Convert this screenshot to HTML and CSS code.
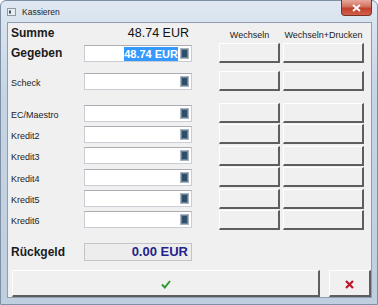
FILE: index.html
```html
<!DOCTYPE html>
<html lang="de">
<head>
  <meta charset="UTF-8" />
  <title>Kassieren</title>
  <link rel="stylesheet" href="styles.css">
</head>
<body>
  <div class="window">
    <div class="titlebar">
      <svg class="app-icon" width="9" height="8" viewBox="0 0 9 8">
        <rect x="0.5" y="0.5" width="8" height="7" fill="#e9edf1" stroke="#8d99a6"/>
        <rect x="2" y="2.5" width="2" height="3" fill="#3d5366"/>
      </svg>
      <span class="title">Kassieren</span>
      <div class="close-btn">
        <svg width="9" height="8" viewBox="0 0 9 8">
          <path d="M1 1 L8 7 M8 1 L1 7" stroke="#fff" stroke-width="1.8"/>
        </svg>
      </div>
    </div>

    <div class="client">
      <div class="row head-row">
        <span class="label big">Summe</span>
        <span class="sum-value">48.74 EUR</span>
        <span class="col-head col1">Wechseln</span>
        <span class="col-head col2">Wechseln+Drucken</span>
      </div>

      <div class="row">
        <span class="label big">Gegeben</span>
        <div class="field">
          <span class="field-text"><span class="selected">48.74 EUR</span></span>
          <span class="spin"></span>
        </div>
        <div class="btn col1"></div>
        <div class="btn col2"></div>
      </div>

      <div class="row scheck-row">
        <span class="label small">Scheck</span>
        <div class="field"><span class="field-text"></span><span class="spin"></span></div>
        <div class="btn col1"></div>
        <div class="btn col2"></div>
      </div>

      <div class="card-group">
        <div class="row">
          <span class="label small">EC/Maestro</span>
          <div class="field"><span class="field-text"></span><span class="spin"></span></div>
          <div class="btn col1"></div>
          <div class="btn col2"></div>
        </div>
        <div class="row">
          <span class="label small">Kredit2</span>
          <div class="field"><span class="field-text"></span><span class="spin"></span></div>
          <div class="btn col1"></div>
          <div class="btn col2"></div>
        </div>
        <div class="row">
          <span class="label small">Kredit3</span>
          <div class="field"><span class="field-text"></span><span class="spin"></span></div>
          <div class="btn col1"></div>
          <div class="btn col2"></div>
        </div>
        <div class="row">
          <span class="label small">Kredit4</span>
          <div class="field"><span class="field-text"></span><span class="spin"></span></div>
          <div class="btn col1"></div>
          <div class="btn col2"></div>
        </div>
        <div class="row">
          <span class="label small">Kredit5</span>
          <div class="field"><span class="field-text"></span><span class="spin"></span></div>
          <div class="btn col1"></div>
          <div class="btn col2"></div>
        </div>
        <div class="row">
          <span class="label small">Kredit6</span>
          <div class="field"><span class="field-text"></span><span class="spin"></span></div>
          <div class="btn col1"></div>
          <div class="btn col2"></div>
        </div>
      </div>

      <div class="row change-row">
        <span class="label big">Rückgeld</span>
        <div class="change-box">0.00 EUR</div>
      </div>

      <div class="actions">
        <div class="btn ok-btn">
          <svg width="10" height="9" viewBox="0 0 10 9">
            <path d="M1 4.5 L3.8 7.5 L9 1" fill="none" stroke="#2f9a2a" stroke-width="2"/>
          </svg>
        </div>
        <div class="btn cancel-btn">
          <svg width="9" height="9" viewBox="0 0 9 9">
            <path d="M1 1 L8 8 M8 1 L1 8" stroke="#c0142b" stroke-width="2.2"/>
          </svg>
        </div>
      </div>
    </div>
  </div>
</body>
</html>
```

FILE: styles.css
```css
body {
  margin: 0;
  font-family: 'Liberation Sans', Arial, sans-serif;
  background: #fff;
}

.window {
  width: 378px;
  height: 305px;
  box-sizing: border-box;
  display: flex;
  flex-direction: column;
  background: linear-gradient(to bottom, #dfe8f2, #c6d5e5 30%, #bfcfe0);
  border: 1px solid #7f90a4;
  border-radius: 6px 6px 0 0;
}

/* title bar */

.titlebar {
  height: 21px;
  display: flex;
  align-items: center;
  padding-left: 6px;
}

.app-icon {
  margin-top: 1px;
}

.title {
  font-size: 8.5px;
  color: #1e1e1e;
  margin-left: 6px;
  margin-top: 1px;
}

.close-btn {
  margin-left: auto;
  margin-right: 5px;
  align-self: flex-start;
  margin-top: -1px;
  width: 31px;
  height: 16px;
  display: flex;
  align-items: center;
  justify-content: center;
  background: linear-gradient(to bottom, #e9a99b, #d0705e 45%, #c0402c 55%, #d2604a);
  border: 1px solid #7a3226;
  border-top: none;
  border-radius: 0 0 4px 4px;
  box-sizing: border-box;
}

/* client area */

.client {
  flex: 1;
  margin: 0 5px 6px 6px;
  background: #f0f0f0;
  border: 1px solid #8e9db0;
  padding-left: 3px;
  display: flex;
  flex-direction: column;
}

.row {
  display: flex;
  align-items: center;
  height: 20px;
  flex-shrink: 0;
}

.head-row {
  height: 20px;
}

.scheck-row {
  margin-top: 8px;
}

.card-group {
  display: flex;
  flex-direction: column;
  gap: 1.4px;
  margin-top: 12px;
}

.change-row {
  margin-top: 12px;
}

.label {
  width: 73px;
  flex-shrink: 0;
  color: #1b1b1b;
}

.label.big {
  font-size: 12px;
  font-weight: bold;
}

.label.small {
  font-size: 9px;
  padding-top: 3px;
}

.sum-value {
  width: 108px;
  box-sizing: border-box;
  padding-right: 3px;
  text-align: right;
  font-size: 12.5px;
  color: #111;
}

.col-head {
  font-size: 9px;
  color: #222;
  text-align: center;
  padding-top: 3px;
}

/* text boxes */

.field {
  width: 108px;
  height: 17px;
  box-sizing: border-box;
  display: flex;
  align-items: center;
  background: #fff;
  border: 1px solid #c9ccd2;
  border-top-color: #abadb3;
  padding-right: 2px;
  flex-shrink: 0;
}

.field-text {
  flex: 1;
  text-align: right;
  padding-right: 2px;
}

.selected {
  background: #3399ff;
  color: #fff;
  font-size: 11px;
  font-weight: bold;
  padding: 1px 0;
}

.spin {
  width: 9px;
  height: 11px;
  box-sizing: border-box;
  background: #2e4f6b;
  border: 1px solid #a9b3bd;
  box-shadow: inset 0 0 0 1px #6d8294;
}

.change-box {
  width: 108px;
  height: 18px;
  box-sizing: border-box;
  background: #ededed;
  border: 1px solid #c4c4c4;
  text-align: right;
  padding-right: 3px;
  font-size: 13px;
  font-weight: bold;
  color: #23238a;
  line-height: 16px;
}

/* buttons */

.btn {
  height: 20px;
  box-sizing: border-box;
  background: #f0f0f0;
  border-top: 1px solid #fff;
  border-left: 1px solid #fff;
  border-right: 2px solid #5e5e5e;
  border-bottom: 2px solid #5e5e5e;
}

.btn.col1,
.col-head.col1 {
  width: 61px;
  margin-left: 27px;
  flex-shrink: 0;
}

.btn.col2,
.col-head.col2 {
  width: 81px;
  margin-left: 3px;
  flex-shrink: 0;
}

.col-head.col1 {
  margin-left: 27px;
}

.actions {
  display: flex;
  margin-top: auto;
  margin-left: 1px;
}

.ok-btn,
.cancel-btn {
  height: 27px;
  display: flex;
  align-items: center;
  justify-content: center;
  padding-top: 2px;
}

.ok-btn {
  width: 309px;
}

.cancel-btn {
  width: 42px;
  margin-left: 9px;
}
```
